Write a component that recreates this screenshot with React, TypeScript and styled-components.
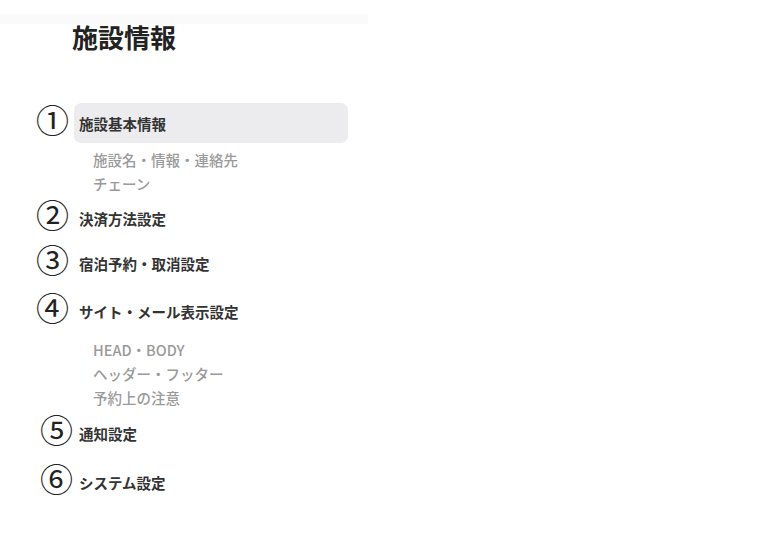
import React from 'react';
import styled, { createGlobalStyle } from 'styled-components';

const GlobalStyle = createGlobalStyle`
    body {
        margin: 0;
        background: #fff;
        font-family: "Noto Sans CJK JP", "Noto Sans", sans-serif;
    }
`

type MenuItem = {
    num: string;
    label: string;
    active?: boolean;
    shift?: boolean;
    space?: number;
    subs?: string[];
    subSpace?: number;
};

const menu: MenuItem[] = [
    { num: '①', label: '施設基本情報', active: true, subs: ['施設名・情報・連絡先', 'チェーン'] },
    { num: '②', label: '決済方法設定' },
    { num: '③', label: '宿泊予約・取消設定' },
    { num: '④', label: 'サイト・メール表示設定', space: 3, subs: ['HEAD・BODY', 'ヘッダー・フッター', '予約上の注意'], subSpace: 2 },
    { num: '⑤', label: '通知設定', shift: true, space: 1 },
    { num: '⑥', label: 'システム設定', shift: true, space: 4 },
];

const App = () => {
    return (
    <>
    <GlobalStyle/>
    <Sidebar>
        <TopBand/>
        <Title>施設情報</Title>
        <Menu>
            {menu.map((item) => (
                <React.Fragment key={item.num}>
                    <Row $space={item.space ?? 0}>
                        <Num $shift={item.shift}>{item.num}</Num>
                        <Label $active={item.active}>{item.label}</Label>
                    </Row>
                    {item.subs && (
                        <SubList $space={item.subSpace ?? 0}>
                            {item.subs.map((s) => (
                                <SubItem key={s}>{s}</SubItem>
                            ))}
                        </SubList>
                    )}
                </React.Fragment>
            ))}
        </Menu>
    </Sidebar>
    </>
    );
};

export default App;

const Sidebar = styled.div`
    width: 368px;
    padding-top: 14px;
`

const TopBand = styled.div`
    height: 10px;
    background: #fafafa;
`

const Title = styled.h1`
    margin: 0;
    padding-left: 72px;
    height: 41px;
    font-size: 26px;
    line-height: 26px;
    font-weight: 700;
    color: #222;
`

const Menu = styled.div`
    margin-top: 38px;
    display: flex;
    flex-direction: column;
    gap: 5px;
`

const Row = styled.div<{ $space: number }>`
    display: flex;
    align-items: center;
    height: 40px;
    padding-left: 36px;
    margin-top: ${(p) => p.$space}px;
`

const Num = styled.span<{ $shift?: boolean }>`
    width: 38px;
    box-sizing: border-box;
    padding-left: ${(p) => (p.$shift ? '4px' : '0')};
    font-size: 33px;
    line-height: 33px;
    color: #222;
    margin-top: -8px;
    white-space: nowrap;
`

const Label = styled.div<{ $active?: boolean }>`
    width: 274px;
    height: 40px;
    box-sizing: border-box;
    padding-left: 5px;
    display: flex;
    align-items: center;
    border-radius: 7px;
    background: ${(p) => (p.$active ? '#ececee' : 'transparent')};
    font-size: 14.5px;
    font-weight: 700;
    color: #333;
`

const SubList = styled.ul<{ $space: number }>`
    list-style: none;
    margin: ${(p) => p.$space}px 0 -3px;
    padding: 0 0 0 93px;
`

const SubItem = styled.li`
    height: 24px;
    line-height: 24px;
    font-size: 14.5px;
    font-weight: 500;
    color: #9a9a9a;
`
